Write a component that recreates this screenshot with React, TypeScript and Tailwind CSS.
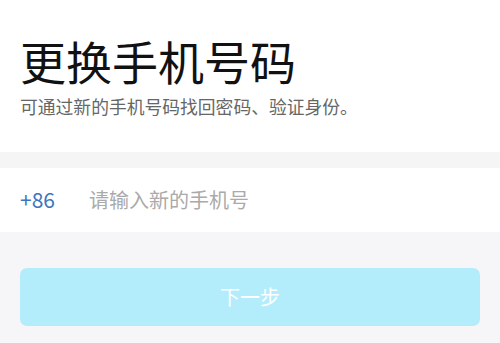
import React from "react";

const font = { fontFamily: '"Noto Sans CJK SC", "Noto Sans", sans-serif' };

export default function App() {
  return (
    <div className="w-[500px] h-[343px] overflow-hidden bg-[#f6f6f9]" style={font}>
      {/* Header */}
      <div className="bg-white h-[152px] pl-[20px] pt-[30px]">
        <h1 className="text-[46px] leading-[60px] text-[#111] font-normal">更换手机号码</h1>
        <p className="mt-[4px] text-[17.8px] leading-[24px] text-[#666]">可通过新的手机号码找回密码、验证身份。</p>
      </div>

      <div className="h-[16px] bg-[#f5f5f6]" />

      {/* Phone input row */}
      <div className="bg-white h-[64px] flex items-center px-[20px]">
        <span className="w-[69px] text-[21px] text-[#3b76bd]">+86</span>
        <input
          className="flex-1 outline-none bg-transparent text-[20px] text-[#333] placeholder:text-[#aaaaaa]"
          placeholder="请输入新的手机号"
        />
      </div>

      {/* Next button */}
      <div className="px-[20px] pt-[36px]">
        <button className="w-full h-[58px] rounded-[7px] bg-[#b3edfb] text-white text-[20px]">下一步</button>
      </div>
    </div>
  );
}
